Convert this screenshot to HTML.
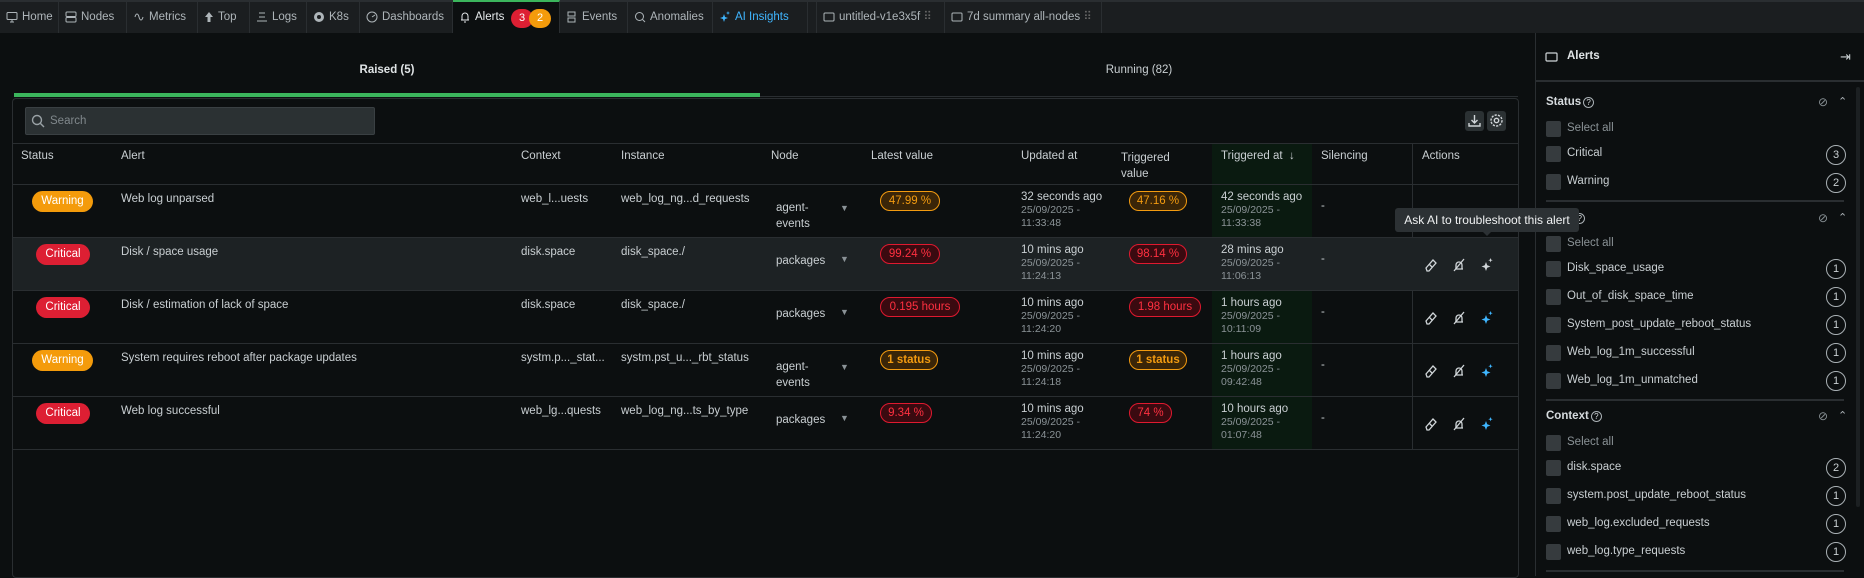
<!DOCTYPE html>
<html><head><meta charset="utf-8"><style>
*{box-sizing:border-box;margin:0;padding:0}
body{width:1864px;height:576px;overflow:hidden;background:#0c0f10;font-family:"Liberation Sans",sans-serif;font-size:11.5px;color:#c9cfd2;position:relative}
.a{position:absolute;white-space:nowrap}
.tabbar{position:absolute;left:0;top:0;width:1864px;height:33px;background:#1b1e20;border-top:2px solid #2a2e31}
.tab{position:absolute;top:0;height:31px;line-height:31px;border-right:1px solid #2a2e31;color:#aeb5b9;font-size:11.5px;padding-left:6px}
.tab svg{vertical-align:-3px;margin-right:4px}
.pill{position:absolute;height:21px;border-radius:11px;text-align:center;line-height:21px;font-size:11.5px;color:#fff}
.w{background:#f49b0b}.c{background:#dd1f33}
.vo{position:absolute;height:20px;line-height:18px;border-radius:10px;border:1.5px solid #f39b10;color:#f39b10;background:#3a2508;text-align:center;font-size:11.5px}
.vr{position:absolute;height:20px;line-height:18px;border-radius:10px;border:1.5px solid #e0192f;color:#ff3040;background:#3a0a10;text-align:center;font-size:11.5px}
.sub{color:#8b9397;font-size:10.5px}
.cb{position:absolute;left:1546px;width:15px;height:16px;background:#363b3e;border-radius:2px}
.lbl{position:absolute;left:1567px;color:#c9cfd2;font-size:11.5px}
.cnt{position:absolute;left:1826px;width:20px;height:20px;border:1px solid #aab1b5;border-radius:50%;text-align:center;line-height:18px;font-size:11px;color:#c9cfd2}
.sect{position:absolute;left:1546px;font-weight:bold;font-size:11.5px;color:#d6dbde}
.q{display:inline-block;width:11px;height:11px;border:1px solid #aab1b5;border-radius:50%;font-size:8px;line-height:9px;text-align:center;font-weight:normal;margin-left:2px;vertical-align:0}
.hr{position:absolute;left:1546px;width:298px;height:2px;background:#2a2e31}
</style></head><body>
<div class="tabbar">
<div class="tab" style="left:0;width:59px"><svg width="12" height="12" viewBox="0 0 12 12" fill="none" stroke="#aeb5b9"><rect x="1" y="1.5" width="10" height="7" rx="1"/><path d="M4 11h4M6 8.5v2.5"/></svg>Home</div>
<div class="tab" style="left:59px;width:68px"><svg width="12" height="12" viewBox="0 0 12 12" fill="none" stroke="#aeb5b9"><rect x="1" y="1" width="10" height="4.5" rx="1"/><rect x="1" y="6.5" width="10" height="4.5" rx="1"/></svg>Nodes</div>
<div class="tab" style="left:127px;width:71px"><svg width="12" height="12" viewBox="0 0 12 12" fill="none" stroke="#aeb5b9"><path d="M2 6c1-4 3-4 4 0s3 4 4 0"/></svg>Metrics</div>
<div class="tab" style="left:198px;width:52px"><svg width="10" height="12" viewBox="0 0 10 12" fill="#aeb5b9"><path d="M5 1L1 6h2.5v5h3V6H9z"/></svg>Top</div>
<div class="tab" style="left:250px;width:57px"><svg width="12" height="12" viewBox="0 0 12 12" fill="none" stroke="#aeb5b9"><path d="M3 2h6M3 6h6M1 10h10"/></svg>Logs</div>
<div class="tab" style="left:307px;width:53px"><svg width="12" height="12" viewBox="0 0 12 12"><circle cx="6" cy="6" r="5" fill="#aeb5b9"/><circle cx="6" cy="6" r="2" fill="#1b1e20"/></svg>K8s</div>
<div class="tab" style="left:360px;width:93px"><svg width="12" height="12" viewBox="0 0 12 12" fill="none" stroke="#aeb5b9"><circle cx="6" cy="6" r="5"/><path d="M6 6l3-2"/></svg>Dashboards</div>
<div class="tab" style="left:453px;width:107px;background:#0c0f10;color:#e6eaec;border-top:2px solid #3bb55c;top:-2px;height:33px"><svg width="12" height="13" viewBox="0 0 12 13" fill="none" stroke="#e6eaec"><path d="M2 10h8M3 10V6a3 3 0 016 0v4M5 12h2"/></svg>Alerts<span style="position:absolute;left:58px;top:7px;width:22px;height:19px;border-radius:10px;background:#dd1f33;color:#fff;line-height:19px;text-align:center;font-size:11px">3</span><span style="position:absolute;left:76px;top:7px;width:22px;height:19px;border-radius:10px;background:#f49b0b;color:#fff;line-height:19px;text-align:center;font-size:11px">2</span></div>
<div class="tab" style="left:560px;width:68px"><svg width="12" height="12" viewBox="0 0 12 12" fill="none" stroke="#aeb5b9"><rect x="2" y="1" width="7" height="4"/><rect x="2" y="7" width="7" height="4"/></svg>Events</div>
<div class="tab" style="left:628px;width:85px"><svg width="12" height="12" viewBox="0 0 12 12" fill="none" stroke="#aeb5b9"><circle cx="5.5" cy="5.5" r="4"/><path d="M8.5 8.5L11 11"/></svg>Anomalies</div>
<div class="tab" style="left:713px;width:95px;color:#3fb6ff"><svg width="12" height="12" viewBox="0 0 12 12" fill="#3fb6ff"><path d="M5 3l1 3 3 1-3 1-1 3-1-3-3-1 3-1zM9 0l.5 1.5L11 2l-1.5.5L9 4l-.5-1.5L7 2l1.5-.5z"/></svg>AI Insights</div>
<div class="tab" style="left:808px;width:9px"></div>
<div class="tab" style="left:817px;width:128px"><svg width="12" height="12" viewBox="0 0 12 12" fill="none" stroke="#aeb5b9"><rect x="1" y="2" width="10" height="8" rx="1"/></svg>untitled-v1e3x5f <span style="color:#666">⠿</span></div>
<div class="tab" style="left:945px;width:157px"><svg width="12" height="12" viewBox="0 0 12 12" fill="none" stroke="#aeb5b9"><rect x="1" y="2" width="10" height="8" rx="1"/></svg>7d summary all-nodes <span style="color:#666">⠿</span></div>
</div>

<div class="a" style="left:14px;top:64px;width:746px;text-align:center;font-weight:bold;color:#e0e4e6">Raised (5)</div>
<div class="a" style="left:760px;top:64px;width:758px;text-align:center;color:#c9cfd2">Running (82)</div>
<div class="a" style="left:14px;top:93px;width:746px;height:4px;background:#3bb55c"></div>
<div class="a" style="left:760px;top:96px;width:758px;height:1px;background:#2a2e31"></div>

<div class="a" style="left:12px;top:98px;width:1507px;height:480px;border:1px solid #2a2e31;border-radius:4px;background:#0c0f10"></div>
<div class="a" style="left:25px;top:107px;width:350px;height:28px;background:#2b3133;border:1px solid #3a4043;border-radius:2px;color:#80888c;line-height:26px;padding-left:24px">Search</div>
<svg class="a" style="left:31px;top:114px" width="14" height="14" viewBox="0 0 14 14" fill="none" stroke="#9aa2a6" stroke-width="1.4"><circle cx="6" cy="6" r="4.5"/><path d="M9.5 9.5L13 13"/></svg>
<div class="a" style="left:1465px;top:111px;width:19px;height:20px;background:#2b3133;border-radius:3px"></div>
<svg class="a" style="left:1467px;top:113px" width="15" height="15" viewBox="0 0 15 15" fill="none" stroke="#d0d5d8" stroke-width="1.4"><path d="M7.5 2v8M4.5 7l3 3 3-3M2 10v3h11v-3"/></svg>
<div class="a" style="left:1487px;top:111px;width:19px;height:20px;background:#2b3133;border-radius:3px"></div>
<svg class="a" style="left:1489px;top:113px" width="15" height="15" viewBox="0 0 15 15" fill="none" stroke="#d0d5d8" stroke-width="1.4"><circle cx="7.5" cy="7.5" r="2.2"/><circle cx="7.5" cy="7.5" r="5.5" stroke-dasharray="2.2 1.2"/></svg>

<div class="a" style="left:13px;top:143px;width:1505px;height:1px;background:#2a2e31"></div>
<div class="a" style="left:1212px;top:144px;width:100px;height:305px;background:#0a1a10"></div>
<div class="a" style="left:1412px;top:144px;width:1px;height:305px;background:#2a2e31"></div>
<div class="a" style="top:150px;left:21px">Status</div>
<div class="a" style="top:150px;left:121px">Alert</div>
<div class="a" style="top:150px;left:521px">Context</div>
<div class="a" style="top:150px;left:621px">Instance</div>
<div class="a" style="top:150px;left:771px">Node</div>
<div class="a" style="top:150px;left:871px">Latest value</div>
<div class="a" style="top:150px;left:1021px">Updated at</div>
<div class="a" style="top:150px;left:1121px;line-height:16px;white-space:normal;width:60px">Triggered value</div>
<div class="a" style="top:150px;left:1221px">Triggered at &nbsp;↓</div>
<div class="a" style="top:150px;left:1321px">Silencing</div>
<div class="a" style="top:150px;left:1422px">Actions</div>

<div class="a" style="left:13px;top:184px;width:1505px;height:1px;background:#2a2e31"></div>
<div class="a" style="left:13px;top:237px;width:1505px;height:53px;background:#1d2224;border-top:1px solid #2a2e31"></div>
<div class="a" style="left:13px;top:290px;width:1505px;height:1px;background:#2a2e31"></div>
<div class="a" style="left:13px;top:343px;width:1505px;height:1px;background:#2a2e31"></div>
<div class="a" style="left:13px;top:396px;width:1505px;height:1px;background:#2a2e31"></div>
<div class="a" style="left:13px;top:449px;width:1505px;height:1px;background:#2a2e31"></div>

<!-- rows -->
<div class="pill w" style="left:32px;top:191px;width:61px">Warning</div>
<div class="a" style="left:121px;top:193px">Web log unparsed</div>
<div class="a" style="left:521px;top:193px">web_l...uests</div>
<div class="a" style="left:621px;top:193px">web_log_ng...d_requests</div>
<div class="a" style="left:776px;top:200px;line-height:16px">agent-<br>events</div>
<div class="a" style="left:840px;top:203px;color:#8a9296;font-size:9px">▼</div>
<div class="vo" style="left:880px;top:191px;width:60px">47.99 %</div>
<div class="a" style="left:1021px;top:191px;line-height:13px">32 seconds ago<br><span class="sub">25/09/2025 -<br>11:33:48</span></div>
<div class="vo" style="left:1129px;top:191px;width:58px">47.16 %</div>
<div class="a" style="left:1221px;top:191px;line-height:13px">42 seconds ago<br><span class="sub">25/09/2025 -<br>11:33:38</span></div>
<div class="a" style="left:1321px;top:200px">-</div>

<div class="pill c" style="left:36px;top:244px;width:54px">Critical</div>
<div class="a" style="left:121px;top:246px">Disk / space usage</div>
<div class="a" style="left:521px;top:246px">disk.space</div>
<div class="a" style="left:621px;top:246px">disk_space./</div>
<div class="a" style="left:776px;top:255px">packages</div>
<div class="a" style="left:840px;top:254px;color:#8a9296;font-size:9px">▼</div>
<div class="vr" style="left:880px;top:244px;width:60px">99.24 %</div>
<div class="a" style="left:1021px;top:244px;line-height:13px">10 mins ago<br><span class="sub">25/09/2025 -<br>11:24:13</span></div>
<div class="vr" style="left:1129px;top:244px;width:58px">98.14 %</div>
<div class="a" style="left:1221px;top:244px;line-height:13px">28 mins ago<br><span class="sub">25/09/2025 -<br>11:06:13</span></div>
<div class="a" style="left:1321px;top:253px">-</div>

<div class="pill c" style="left:36px;top:297px;width:54px">Critical</div>
<div class="a" style="left:121px;top:299px">Disk / estimation of lack of space</div>
<div class="a" style="left:521px;top:299px">disk.space</div>
<div class="a" style="left:621px;top:299px">disk_space./</div>
<div class="a" style="left:776px;top:308px">packages</div>
<div class="a" style="left:840px;top:307px;color:#8a9296;font-size:9px">▼</div>
<div class="vr" style="left:880px;top:297px;width:80px">0.195 hours</div>
<div class="a" style="left:1021px;top:297px;line-height:13px">10 mins ago<br><span class="sub">25/09/2025 -<br>11:24:20</span></div>
<div class="vr" style="left:1129px;top:297px;width:72px">1.98 hours</div>
<div class="a" style="left:1221px;top:297px;line-height:13px">1 hours ago<br><span class="sub">25/09/2025 -<br>10:11:09</span></div>
<div class="a" style="left:1321px;top:306px">-</div>

<div class="pill w" style="left:32px;top:350px;width:61px">Warning</div>
<div class="a" style="left:121px;top:352px">System requires reboot after package updates</div>
<div class="a" style="left:521px;top:352px">systm.p..._stat...</div>
<div class="a" style="left:621px;top:352px">systm.pst_u..._rbt_status</div>
<div class="a" style="left:776px;top:359px;line-height:16px">agent-<br>events</div>
<div class="a" style="left:840px;top:362px;color:#8a9296;font-size:9px">▼</div>
<div class="vo" style="left:880px;top:350px;width:58px;font-weight:bold">1 status</div>
<div class="a" style="left:1021px;top:350px;line-height:13px">10 mins ago<br><span class="sub">25/09/2025 -<br>11:24:18</span></div>
<div class="vo" style="left:1129px;top:350px;width:58px;font-weight:bold">1 status</div>
<div class="a" style="left:1221px;top:350px;line-height:13px">1 hours ago<br><span class="sub">25/09/2025 -<br>09:42:48</span></div>
<div class="a" style="left:1321px;top:359px">-</div>

<div class="pill c" style="left:36px;top:403px;width:54px">Critical</div>
<div class="a" style="left:121px;top:405px">Web log successful</div>
<div class="a" style="left:521px;top:405px">web_lg...quests</div>
<div class="a" style="left:621px;top:405px">web_log_ng...ts_by_type</div>
<div class="a" style="left:776px;top:414px">packages</div>
<div class="a" style="left:840px;top:413px;color:#8a9296;font-size:9px">▼</div>
<div class="vr" style="left:880px;top:403px;width:52px">9.34 %</div>
<div class="a" style="left:1021px;top:403px;line-height:13px">10 mins ago<br><span class="sub">25/09/2025 -<br>11:24:20</span></div>
<div class="vr" style="left:1129px;top:403px;width:43px">74 %</div>
<div class="a" style="left:1221px;top:403px;line-height:13px">10 hours ago<br><span class="sub">25/09/2025 -<br>01:07:48</span></div>
<div class="a" style="left:1321px;top:412px">-</div>

<!-- action icons -->
<svg class="a" style="left:1424px;top:203px" width="70" height="240" viewBox="0 0 70 240">
<defs><g id="er" fill="none" stroke="#d0d5d8" stroke-width="1.3"><path d="M1 10l7-8 3 3-7 8H2z M4 6l3 3"/></g>
<g id="bo" fill="none" stroke="#d0d5d8" stroke-width="1.3"><path d="M2 11h8M3 11V7a3 3 0 016 0v4M1 13L11 1"/></g>
<g id="sp" fill="#3fb6ff"><path d="M5 4l1.2 3.3 3.3 1.2-3.3 1.2L5 13l-1.2-3.3L.5 8.5l3.3-1.2zM9.5 0l.6 1.6 1.6.6-1.6.6-.6 1.6-.6-1.6-1.6-.6 1.6-.6z"/></g></defs>
<use href="#er" x="1" y="55"/><use href="#bo" x="29" y="55"/><g transform="translate(57,55)" fill="#d0d5d8"><path d="M5 4l1.2 3.3 3.3 1.2-3.3 1.2L5 13l-1.2-3.3L.5 8.5l3.3-1.2zM9.5 0l.6 1.6 1.6.6-1.6.6-.6 1.6-.6-1.6-1.6-.6 1.6-.6z"/></g>
<use href="#er" x="1" y="108"/><use href="#bo" x="29" y="108"/><use href="#sp" x="57" y="108"/>
<use href="#er" x="1" y="161"/><use href="#bo" x="29" y="161"/><use href="#sp" x="57" y="161"/>
<use href="#er" x="1" y="214"/><use href="#bo" x="29" y="214"/><use href="#sp" x="57" y="214"/>
</svg>

<!-- right panel -->
<div class="a" style="left:1535px;top:33px;width:1px;height:543px;background:#2a2e31"></div>
<svg class="a" style="left:1545px;top:52px" width="13" height="11" viewBox="0 0 13 11" fill="none" stroke="#d0d5d8" stroke-width="1.2"><rect x="1" y="1" width="11" height="8" rx="1"/></svg>
<div class="a" style="left:1567px;top:50px;font-weight:bold;color:#e0e4e6">Alerts</div>
<div class="a" style="left:1840px;top:49px;color:#c9cfd2;font-size:13px">⇥</div>
<div class="a" style="left:1536px;top:80px;width:328px;height:2px;background:#2a2e31"></div>
<div class="a" style="left:1856px;top:87px;width:4px;height:420px;background:#1c2022;border-radius:2px"></div>

<div class="sect" style="top:96px">Status<span class="q">?</span></div>
<div class="a" style="left:1818px;top:95px;color:#8a9296;font-size:12px">⊘</div><div class="a" style="left:1838px;top:95px;color:#aab1b5;font-size:11px">⌃</div>
<div class="cb" style="top:121px"></div><div class="lbl" style="top:122px;color:#8a9296">Select all</div>
<div class="cb" style="top:146px"></div><div class="lbl" style="top:147px">Critical</div><div class="cnt" style="top:145px">3</div>
<div class="cb" style="top:174px"></div><div class="lbl" style="top:175px">Warning</div><div class="cnt" style="top:173px">2</div>
<div class="hr" style="top:200px"></div>

<div class="sect" style="top:212px">Alert<span class="q">?</span></div>
<div class="a" style="left:1818px;top:211px;color:#8a9296;font-size:12px">⊘</div><div class="a" style="left:1838px;top:211px;color:#aab1b5;font-size:11px">⌃</div>
<div class="cb" style="top:236px"></div><div class="lbl" style="top:237px;color:#8a9296">Select all</div>
<div class="cb" style="top:261px"></div><div class="lbl" style="top:262px">Disk_space_usage</div><div class="cnt" style="top:259px">1</div>
<div class="cb" style="top:289px"></div><div class="lbl" style="top:290px">Out_of_disk_space_time</div><div class="cnt" style="top:287px">1</div>
<div class="cb" style="top:317px"></div><div class="lbl" style="top:318px">System_post_update_reboot_status</div><div class="cnt" style="top:315px">1</div>
<div class="cb" style="top:345px"></div><div class="lbl" style="top:346px">Web_log_1m_successful</div><div class="cnt" style="top:343px">1</div>
<div class="cb" style="top:373px"></div><div class="lbl" style="top:374px">Web_log_1m_unmatched</div><div class="cnt" style="top:371px">1</div>
<div class="hr" style="top:399px"></div>

<div class="sect" style="top:410px">Context<span class="q">?</span></div>
<div class="a" style="left:1818px;top:409px;color:#8a9296;font-size:12px">⊘</div><div class="a" style="left:1838px;top:409px;color:#aab1b5;font-size:11px">⌃</div>
<div class="cb" style="top:435px"></div><div class="lbl" style="top:436px;color:#8a9296">Select all</div>
<div class="cb" style="top:460px"></div><div class="lbl" style="top:461px">disk.space</div><div class="cnt" style="top:458px">2</div>
<div class="cb" style="top:488px"></div><div class="lbl" style="top:489px">system.post_update_reboot_status</div><div class="cnt" style="top:486px">1</div>
<div class="cb" style="top:516px"></div><div class="lbl" style="top:517px">web_log.excluded_requests</div><div class="cnt" style="top:514px">1</div>
<div class="cb" style="top:544px"></div><div class="lbl" style="top:545px">web_log.type_requests</div><div class="cnt" style="top:542px">1</div>
<div class="hr" style="top:570px"></div>

<!-- tooltip -->
<div class="a" style="left:1395px;top:208px;width:184px;height:24px;background:#2c3134;border-radius:3px;color:#f0f2f3;line-height:24px;text-align:center;font-size:12px">Ask AI to troubleshoot this alert</div>
<div class="a" style="left:1483px;top:232px;width:0;height:0;border-left:4px solid transparent;border-right:4px solid transparent;border-top:4px solid #2c3134"></div>
</body></html>
